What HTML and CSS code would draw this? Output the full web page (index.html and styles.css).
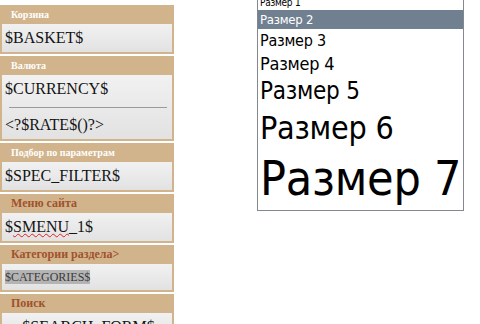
FILE: index.html
```html
<!DOCTYPE html>
<html lang="ru">

<head>
  <meta charset="UTF-8">
  <title>Шаблон</title>
  <link rel="stylesheet" href="styles.css">
</head>

<body>
  <div class="page">
    <div class="sidebar">
      <div class="block">
        <div class="block-title">Корзина</div>
        <div class="block-body">$BASKET$</div>
      </div>
      <div class="block">
        <div class="block-title">Валюта</div>
        <div class="block-body">
          <div>$CURRENCY$</div>
          <hr>
          <div>&lt;?$RATE$()?&gt;</div>
        </div>
      </div>
      <div class="block">
        <div class="block-title">Подбор по параметрам</div>
        <div class="block-body">$SPEC_FILTER$</div>
      </div>
      <div class="block">
        <div class="block-title brown">Меню сайта</div>
        <div class="block-body">$<span class="typo">SMENU</span>_1$</div>
      </div>
      <div class="block">
        <div class="block-title brown">Категории раздела&gt;</div>
        <div class="block-body small"><span class="marked">$CATEGORIES$</span></div>
      </div>
      <div class="block">
        <div class="block-title brown">Поиск</div>
        <div class="block-body center">$SEARCH_FORM$</div>
      </div>
    </div>

    <div class="sizes">
      <div class="size s1">Размер 1</div>
      <div class="size s2 selected">Размер 2</div>
      <div class="size s3">Размер 3</div>
      <div class="size s4">Размер 4</div>
      <div class="size s5">Размер 5</div>
      <div class="size s6">Размер 6</div>
      <div class="size s7">Размер 7</div>
    </div>
  </div>
</body>

</html>
```

FILE: styles.css
```css
body {
  margin: 0;
  background-color: #fff;
  overflow: hidden;
}

.page {
  display: flex;
  align-items: flex-start;
  gap: 83px;
}

/* левая колонка с блоками */
.sidebar {
  width: 174px;
  margin-top: 5px;
  font-family: "Liberation Serif", "Times New Roman", serif;
}

.block {
  background-color: #d2b48c;
  padding: 0 2px 2px;
  margin-bottom: 2px;
}

.block-title {
  font-size: 10px;
  font-weight: bold;
  line-height: 19px;
  color: #fff;
  padding-left: 9px;
}

.block-title.brown {
  font-size: 12px;
  color: #a0522d;
}

.block-body {
  background: linear-gradient(#f1f1f1, #e2e2e2);
  font-size: 16px;
  line-height: 28px;
  color: #141414;
  padding-left: 3px;
}

.block-body hr {
  height: 0;
  border: 0;
  border-top: 1px solid #9a9a9a;
  margin: 4px 5px 3px 4px;
}

.block-body.small {
  font-size: 12px;
  line-height: 26px;
}

.block-body.center {
  text-align: center;
}

.typo {
  text-decoration: underline wavy #e02020;
  text-decoration-thickness: 1px;
}

.marked {
  background-color: #b4b4b4;
  color: #3a3a3a;
}

/* список размеров */
.sizes {
  width: 205px;
  margin-top: -6px;
  padding-bottom: 2px;
  border: 1px solid #828790;
  font-family: "DejaVu Sans Condensed", "Liberation Sans", sans-serif;
  letter-spacing: -0.015em;
  color: #000;
}

.size {
  padding: 0 2px;
  white-space: nowrap;
}

.size.selected {
  background-color: #708090;
  color: #fff;
}

.s1 { font-size: 10px; line-height: 15px; }
.s2 { font-size: 13px; line-height: 19px; }
.s3 { font-size: 16px; line-height: 23px; }
.s4 { font-size: 18px; line-height: 24px; }
.s5 { font-size: 24px; line-height: 31px; }
.s6 { font-size: 32px; line-height: 42px; }
.s7 { font-size: 48px; line-height: 59px; }
```
